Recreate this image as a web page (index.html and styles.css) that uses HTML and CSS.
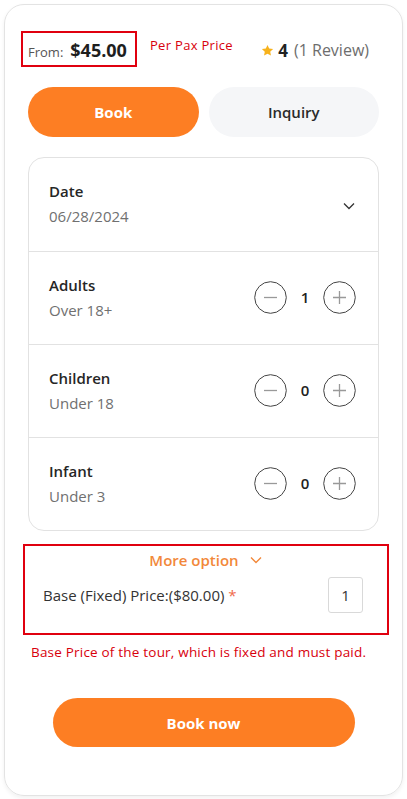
FILE: index.html
```html
<!DOCTYPE html>
<html>
<head>
<meta charset="utf-8">
<link rel="stylesheet" href="styles.css">
</head>
<body>
<div class="card">
  <div class="top">
    <div class="price"><span class="from">From:</span><span class="amount">$45.00</span></div>
    <div class="note-pax">Per Pax Price</div>
    <div class="rating">
      <svg class="star" width="13" height="13" viewBox="0 0 24 24"><path d="M12 1.8l3.1 6.6 7.2.9-5.3 5 1.4 7.1L12 17.9l-6.4 3.5 1.4-7.1-5.3-5 7.2-.9z" fill="#f7b21c"/></svg>
      <span class="score">4</span>
      <span class="reviews">(1 Review)</span>
    </div>
  </div>
  <div class="tabs">
    <button class="tab tab-active">Book</button>
    <button class="tab tab-ghost">Inquiry</button>
  </div>
  <div class="panel">
    <div class="row">
      <div class="label"><div class="title">Date</div><div class="sub">06/28/2024</div></div>
      <svg class="chev" width="14" height="14" viewBox="0 0 14 14"><path d="M2 4.5l5 5 5-5" fill="none" stroke="#333" stroke-width="1.3"/></svg>
    </div>
    <div class="row">
      <div class="label"><div class="title">Adults</div><div class="sub">Over 18+</div></div>
      <div class="counter">
        <span class="circ"><svg width="33" height="33" viewBox="0 0 33 33"><circle cx="16.5" cy="16.5" r="15.8" fill="none" stroke="#444" stroke-width="1"/><path d="M10 16.5h13" stroke="#999" stroke-width="1.3"/></svg></span>
        <span class="num">1</span>
        <span class="circ"><svg width="33" height="33" viewBox="0 0 33 33"><circle cx="16.5" cy="16.5" r="15.8" fill="none" stroke="#444" stroke-width="1"/><path d="M10 16.5h13M16.5 10v13" stroke="#999" stroke-width="1.3"/></svg></span>
      </div>
    </div>
    <div class="row">
      <div class="label"><div class="title">Children</div><div class="sub">Under 18</div></div>
      <div class="counter">
        <span class="circ"><svg width="33" height="33" viewBox="0 0 33 33"><circle cx="16.5" cy="16.5" r="15.8" fill="none" stroke="#444" stroke-width="1"/><path d="M10 16.5h13" stroke="#999" stroke-width="1.3"/></svg></span>
        <span class="num">0</span>
        <span class="circ"><svg width="33" height="33" viewBox="0 0 33 33"><circle cx="16.5" cy="16.5" r="15.8" fill="none" stroke="#444" stroke-width="1"/><path d="M10 16.5h13M16.5 10v13" stroke="#999" stroke-width="1.3"/></svg></span>
      </div>
    </div>
    <div class="row">
      <div class="label"><div class="title">Infant</div><div class="sub">Under 3</div></div>
      <div class="counter">
        <span class="circ"><svg width="33" height="33" viewBox="0 0 33 33"><circle cx="16.5" cy="16.5" r="15.8" fill="none" stroke="#444" stroke-width="1"/><path d="M10 16.5h13" stroke="#999" stroke-width="1.3"/></svg></span>
        <span class="num">0</span>
        <span class="circ"><svg width="33" height="33" viewBox="0 0 33 33"><circle cx="16.5" cy="16.5" r="15.8" fill="none" stroke="#444" stroke-width="1"/><path d="M10 16.5h13M16.5 10v13" stroke="#999" stroke-width="1.3"/></svg></span>
      </div>
    </div>
  </div>
  <div class="more">
    <div class="more-head">More option <svg width="14" height="14" viewBox="0 0 14 14"><path d="M2 4.5l5 5 5-5" fill="none" stroke="#f2883a" stroke-width="1.4"/></svg></div>
    <div class="base-row">
      <span class="base-label">Base (Fixed) Price:($80.00) <span class="req">*</span></span>
      <span class="qty">1</span>
    </div>
  </div>
  <div class="note-base">Base Price of the tour, which is fixed and must paid.</div>
  <div class="cta-wrap"><button class="cta">Book now</button></div>
</div>
</body>
</html>
```
FILE: styles.css
```css
* { box-sizing: border-box; }
body {
  margin: 0;
  padding: 4px;
  background: #fff;
  font-family: "Open Sans", "Noto Sans", sans-serif;
  color: #222;
}
.card {
  width: 399px;
  height: 792px;
  border: 1px solid #e3e3e3;
  border-radius: 20px;
  padding: 26px 23px 0 23px;
  box-shadow: 0 2px 4px rgba(0,0,0,0.06);
}
.top {
  display: flex;
  align-items: center;
  height: 36px;
}
.price {
  display: flex;
  align-items: baseline;
  gap: 7px;
  border: 2px solid #e0000f;
  height: 36px;
  width: 116px;
  padding: 5px 0 0 5px;
  margin-left: -7px;
}
.from { font-size: 13px; color: #555; }
.amount { font-size: 18px; font-weight: 700; color: #1e1e1e; }
.note-pax {
  font-size: 13px;
  color: #d8000c;
  margin-left: 13px;
  align-self: flex-start;
  margin-top: 5px;
  letter-spacing: 0.3px;
}
.rating {
  margin-left: auto;
  display: flex;
  align-items: center;
  gap: 4px;
  margin-right: 10px;
  margin-top: 2px;
}
.score { font-size: 17px; font-weight: 700; color: #222; margin-right: 2px; }
.reviews { font-size: 16px; color: #6d6d6d; }
.tabs {
  display: flex;
  gap: 10px;
  margin-top: 20px;
}
.tab {
  flex: 1;
  height: 50px;
  border: none;
  border-radius: 25px;
  font-family: inherit;
  font-size: 15px;
}
.tab-active { background: #fd7e23; color: #fff; font-weight: 700; }
.tab-ghost { background: #f5f6f8; color: #2a2a2a; font-weight: 600; }
.panel {
  margin-top: 20px;
  border: 1px solid #e2e2e2;
  border-radius: 16px;
}
.row {
  height: 93px;
  display: flex;
  align-items: center;
  justify-content: space-between;
  padding: 0 20px 2px 20px;
  border-top: 1px solid #e2e2e2;
}
.row:first-child { border-top: none; }
.title { font-size: 15px; font-weight: 600; color: #262626; line-height: 20px; }
.sub { font-size: 15px; color: #707070; line-height: 20px; margin-top: 5px; }
.chev { margin-right: 2px; margin-top: 4px; }
.counter {
  display: flex;
  align-items: center;
  margin-right: 2px;
}
.circ { display: block; width: 33px; height: 33px; }
.circ svg { display: block; }
.num { width: 36px; text-align: center; font-size: 15px; font-weight: 600; color: #222; }
.more {
  margin: 13px -10px 0 -5px;
  border: 2px solid #e0000f;
  height: 91px;
  padding: 4px 0 0 18px;
}
.more-head {
  display: flex;
  align-items: center;
  justify-content: center;
  gap: 10px;
  font-size: 15px;
  font-weight: 600;
  color: #f2883a;
  margin-left: -18px;
}
.base-row {
  display: flex;
  align-items: center;
  justify-content: space-between;
  margin-top: 7px;
  padding-right: 24px;
}
.base-label { font-size: 15px; color: #333; }
.req { color: #f06a4a; }
.qty {
  width: 35px;
  height: 36px;
  border: 1px solid #d9d9d9;
  border-radius: 3px;
  display: flex;
  align-items: center;
  justify-content: center;
  font-size: 15px;
  color: #333;
}
.note-base {
  margin-top: 8px;
  margin-left: 3px;
  font-size: 13.5px;
  color: #d8000c;
  letter-spacing: 0.2px;
}
.cta-wrap {
  display: flex;
  justify-content: center;
  margin-top: 37px;
}
.cta {
  width: 302px;
  height: 49px;
  border: none;
  border-radius: 25px;
  background: #fd7e23;
  color: #fff;
  font-family: inherit;
  font-size: 15px;
  font-weight: 700;
}
```
